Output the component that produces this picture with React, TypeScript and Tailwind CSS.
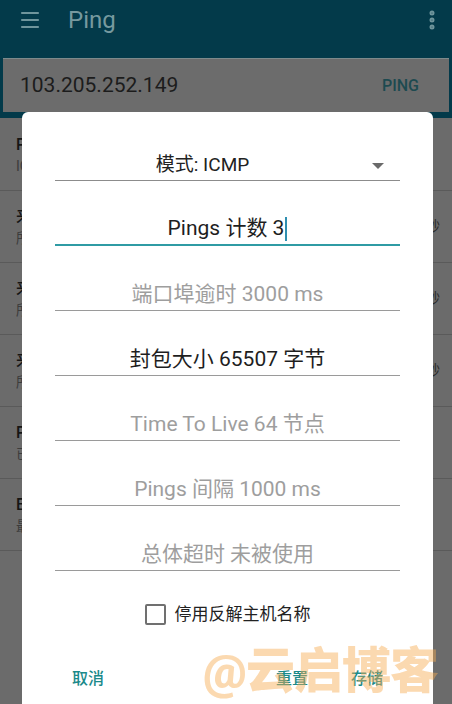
import { Menu, MoreVertical } from 'lucide-react';

const FONT = { fontFamily: "Roboto, 'Noto Sans CJK SC', sans-serif" };

const ROWS = [
  { title: 'PING 103.205.252.149', sub: 'ICMP 56 字节', right: '' },
  { title: '来自 103.205.252.149 的回复', sub: '所需时间 序列=1', right: '45 毫秒' },
  { title: '来自 103.205.252.149 的回复', sub: '所需时间 序列=2', right: '44 毫秒' },
  { title: '来自 103.205.252.149 的回复', sub: '所需时间 序列=3', right: '46 毫秒' },
  { title: 'Ping 统计', sub: '已发送 3 已接收 3', right: '' },
  { title: 'Echo 往返时间', sub: '最小 44 平均 45 最大 46', right: '' },
];

const FIELDS = [
  { text: '端口埠逾时 3000 ms', dim: true },
  { text: '封包大小 65507 字节', dim: false },
  { text: 'Time To Live 64 节点', dim: true },
  { text: 'Pings 间隔 1000 ms', dim: true },
  { text: '总体超时 未被使用', dim: true },
];

export default function App() {
  return (
    <div className="relative w-[452px] h-[704px] overflow-hidden bg-[#6b6b6b]" style={FONT}>
      {/* App bar (under scrim) */}
      <div className="bg-[#033a4a] pb-[6px]">
        <div className="h-[58px] flex items-center px-[18px] pb-[20px] pt-[2px]">
          <Menu className="w-[24px] h-[24px] text-[#6f959c]" strokeWidth={2.2} />
          <span className="ml-[26px] text-[24px] text-[#76999f]">Ping</span>
          <MoreVertical className="ml-auto -mr-[10px] w-[24px] h-[24px] text-[#6f959c]" strokeWidth={3} />
        </div>
        <div className="mx-[3px] h-[54px] bg-[#6c6c6c] border-t border-[#7d8a8c] flex items-center pl-[17px] pr-[30px]">
          <span className="text-[21px] text-[#1c1c1c]">103.205.252.149</span>
          <span className="ml-auto text-[16px] font-medium text-[#1d4a50]">PING</span>
        </div>
      </div>

      {/* Results list (under scrim) */}
      <div className="pt-[1px]">
        {ROWS.map((r, i) => (
          <div key={i} className="h-[72px] border-b border-[#5a5a5a] flex items-center pl-[16px] pr-[12px]">
            <div className="flex flex-col">
              <span className="text-[16px] font-medium text-[#151515] leading-[22px]">{r.title}</span>
              <span className="text-[14px] text-[#3c3c3c] leading-[20px]">{r.sub}</span>
            </div>
            <span className="ml-auto text-[14px] text-[#2a2a2a]">{r.right}</span>
          </div>
        ))}
      </div>

      {/* Dialog */}
      <div className="absolute left-[22px] top-[112px] w-[411px] h-[620px] bg-white rounded-t-[6px] px-[33px] pt-[4px]">
        <div className="h-[65px] flex items-end border-b border-[#8c8c8c]">
          <div className="relative w-full h-[30px] flex items-center justify-center pr-[50px]">
            <span className="text-[19px] text-[#222]">模式: ICMP</span>
            <svg className="absolute right-[16px] top-[13px]" width="12" height="6" viewBox="0 0 12 6">
              <path d="M0 0 L12 0 L6 6 Z" fill="#6a6a6a" />
            </svg>
          </div>
        </div>
        <div className="h-[65px] flex items-end border-b-2 border-[#2f9ba4]">
          <div className="w-full h-[30px] flex items-center justify-center">
            <span className="text-[21px] text-[#1e1e1e]">Pings 计数 3</span>
            <span className="ml-[1px] w-[2px] h-[24px] bg-[#2f8fb0]" />
          </div>
        </div>
        {FIELDS.map((f) => (
          <div key={f.text} className="h-[65px] flex items-end border-b border-[#9a9a9a]">
            <div className="w-full h-[30px] flex items-center justify-center">
              <span className={`text-[21px] ${f.dim ? 'text-[#9e9e9e]' : 'text-[#1e1e1e]'}`}>{f.text}</span>
            </div>
          </div>
        ))}

        <div className="mt-[31px] flex items-center justify-center gap-[9px]">
          <span className="w-[21px] h-[21px] border-2 border-[#707070] rounded-[2px]" />
          <span className="text-[17px] text-[#222]">停用反解主机名称</span>
        </div>

        <div className="mt-[39px] flex items-center px-[17px] text-[16px] font-medium text-[#1a8a8a]">
          <span>取消</span>
          <span className="ml-auto">重置</span>
          <span className="ml-[43px]">存储</span>
        </div>
      </div>

      {/* Watermark */}
      <div className="absolute left-[203px] top-[642px] text-[49px] font-black leading-[60px] tracking-[-1px] text-[rgba(247,170,80,0.45)] whitespace-nowrap">
        @云启博客
      </div>
    </div>
  );
}
